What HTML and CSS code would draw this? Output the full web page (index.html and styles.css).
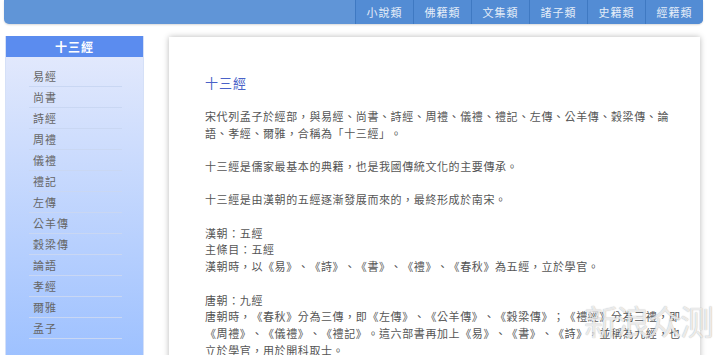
FILE: index.html
```html
<!DOCTYPE html>
<html lang="zh-Hant">

<head>
  <meta charset="UTF-8" />
  <title>十三經</title>
  <link rel="stylesheet" href="styles.css">
</head>

<body>
  <div class="topbar">
    <ul class="nav">
      <li>小說類</li>
      <li>佛籍類</li>
      <li>文集類</li>
      <li>諸子類</li>
      <li>史籍類</li>
      <li>經籍類</li>
    </ul>
  </div>

  <div class="main">
    <div class="sidebar">
      <h3>十三經</h3>
      <ul class="menu">
        <li>易經</li>
        <li>尚書</li>
        <li>詩經</li>
        <li>周禮</li>
        <li>儀禮</li>
        <li>禮記</li>
        <li>左傳</li>
        <li>公羊傳</li>
        <li>穀梁傳</li>
        <li>論語</li>
        <li>孝經</li>
        <li>爾雅</li>
        <li>孟子</li>
      </ul>
      <div class="side-btn"></div>
    </div>

    <div class="card">
      <h2>十三經</h2>
      <p>宋代列孟子於經部，與易經、尚書、詩經、周禮、儀禮、禮記、左傳、公羊傳、穀梁傳、論語、孝經、爾雅，合稱為「十三經」。</p>
      <p>十三經是儒家最基本的典籍，也是我國傳統文化的主要傳承。</p>
      <p>十三經是由漢朝的五經逐漸發展而來的，最終形成於南宋。</p>
      <p>漢朝：五經<br>主條目：五經<br>漢朝時，以《易》、《詩》、《書》、《禮》、《春秋》為五經，立於學官。</p>
      <p>唐朝：九經<br>唐朝時，《春秋》分為三傳，即《左傳》、《公羊傳》、《穀梁傳》；《禮經》分為三禮，即《周禮》、《儀禮》、《禮記》。這六部書再加上《易》、《書》、《詩》，並稱為九經，也立於學官，用於開科取士。</p>
    </div>
  </div>

  <div class="watermark">新浪众测</div>
</body>

</html>
```

FILE: styles.css
```css
body {
  font-family: "Noto Sans CJK TC", "Noto Sans", sans-serif;
  margin: 0;
  background-color: #fff;
  overflow: hidden;
  height: 355px;
  text-spacing-trim: space-all;
}

.topbar {
  height: 24px;
  margin: 0 17px 0 4px;
  background-color: #6095d7;
  border-radius: 0 0 5px 5px;
  box-shadow: 0 1px 2px rgba(0, 0, 0, 0.15);
  display: flex;
  justify-content: flex-end;
}

.nav {
  list-style: none;
  margin: 0;
  padding: 0;
  display: flex;
}

.nav li {
  width: 57px;
  line-height: 24px;
  text-align: center;
  font-size: 11px;
  letter-spacing: 1px;
  color: #e4ecf8;
  background-color: #538cd4;
  border-left: 1px solid #3f79c2;
}

.nav li:last-child {
  border-radius: 0 0 5px 0;
}

.main {
  display: flex;
  align-items: flex-start;
}

.sidebar {
  width: 139px;
  margin: 12px 0 0 5px;
  height: 330px;
  background: linear-gradient(#e6ebfc, #9cc0ff);
  border: 1px solid #d5e0f7;
  border-top: none;
  box-sizing: border-box;
  position: relative;
}

.sidebar h3 {
  margin: 0;
  height: 21px;
  line-height: 21px;
  background-color: #5b8cef;
  color: #fff;
  font-size: 12px;
  font-weight: bold;
  text-align: center;
  letter-spacing: 1px;
}

.menu {
  list-style: none;
  margin: 9px 0 0 23px;
  padding: 0;
  width: 93px;
}

.menu li {
  height: 20px;
  line-height: 20px;
  padding-left: 4px;
  font-size: 11px;
  letter-spacing: 1px;
  color: #666;
  border-bottom: 1px solid #c9d7f3;
}

.side-btn {
  position: absolute;
  left: 40px;
  bottom: -3px;
  width: 58px;
  height: 4px;
  background: #fff;
}

.card {
  flex: 1;
  margin: 13px 20px 0 25px;
  height: 340px;
  background: #fff;
  box-shadow: 0 0 6px rgba(0, 0, 0, 0.28);
  padding: 36px 14px 0 36px;
  box-sizing: border-box;
  overflow: hidden;
}

.card h2 {
  margin: 0 0 15px 0;
  font-size: 13px;
  font-weight: normal;
  letter-spacing: 1px;
  color: #4a62c8;
  line-height: 20px;
}

.card p {
  margin: 0 0 16.5px 0;
  font-size: 11px;
  letter-spacing: 0.6px;
  line-height: 16.8px;
  color: #555;
}

.watermark {
  position: absolute;
  right: 8px;
  top: 296px;
  font-size: 34px;
  color: rgba(255, 255, 255, 0.75);
  text-shadow: 0 0 1px rgba(0, 0, 0, 0.35);
  letter-spacing: -2px;
}
```
